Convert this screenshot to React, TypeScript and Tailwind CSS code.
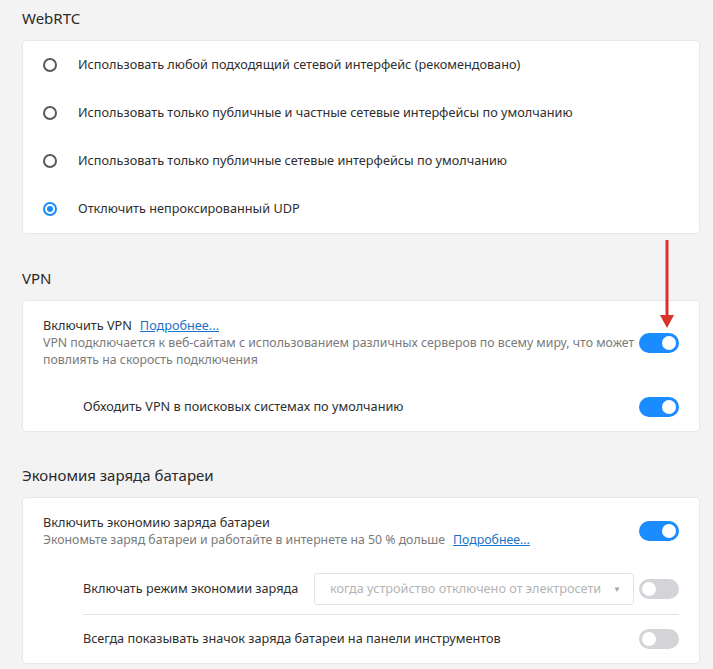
import React from "react";

const font = { fontFamily: '"Noto Sans", "Open Sans", sans-serif' };

function Radio({ checked }: { checked?: boolean }) {
  if (checked) {
    return (
      <span className="w-[14px] h-[14px] rounded-full border-2 border-[#1a8cff] flex items-center justify-center shrink-0">
        <span className="w-[6px] h-[6px] rounded-full bg-[#1a8cff]" />
      </span>
    );
  }
  return <span className="w-[14px] h-[14px] rounded-full border-2 border-[#5a5a5a] shrink-0" />;
}

function Toggle({ on }: { on?: boolean }) {
  return on ? (
    <span className="w-[40px] h-[20px] rounded-full bg-[#1a8cff] flex items-center justify-end px-[3px] shrink-0">
      <span className="w-[14px] h-[14px] rounded-full bg-white" />
    </span>
  ) : (
    <span className="w-[40px] h-[20px] rounded-full bg-[#d3d3d8] flex items-center justify-start px-[3px] shrink-0">
      <span className="w-[14px] h-[14px] rounded-full bg-white" />
    </span>
  );
}

function Title({ children }: { children: React.ReactNode }) {
  return <h2 className="text-[15px] leading-[20px] text-[#2a2a2a] mb-[12px]">{children}</h2>;
}

const radios = [
  "Использовать любой подходящий сетевой интерфейс (рекомендовано)",
  "Использовать только публичные и частные сетевые интерфейсы по умолчанию",
  "Использовать только публичные сетевые интерфейсы по умолчанию",
  "Отключить непроксированный UDP",
];

export default function App() {
  return (
    <div className="min-h-screen bg-[#f3f3f4] pl-[22px] pr-[13px] pt-[8px] text-[12.7px] text-[#2e2e2e]" style={font}>
      <Title>WebRTC</Title>
      <div className="bg-white rounded-[4px] border border-[#e8e8ea]">
        {radios.map((r, i) => (
          <div key={i} className="h-[48px] flex items-center pl-[20px] gap-[21px]">
            <Radio checked={i === 3} />
            <span>{r}</span>
          </div>
        ))}
      </div>

      <div className="mt-[34px]">
        <Title>VPN</Title>
        <div className="relative bg-white rounded-[4px] border border-[#e8e8ea] px-[20px]">
          <div className="flex items-center pt-[16px] pb-[15px] leading-[17px]">
            <div className="flex-1">
              <div className="flex gap-[8px]">
                <span>Включить VPN</span>
                <a className="text-[#1a73c8] underline">Подробнее...</a>
              </div>
              <div className="text-[#7a7a7a] text-[12.3px]">
                <span className="whitespace-nowrap">
                  VPN подключается к веб-сайтам с использованием различных серверов по всему миру, что может
                </span>
                <br />
                повлиять на скорость подключения
              </div>
            </div>
            <Toggle on />
          </div>
          <div className="h-[48px] flex items-center pl-[40px]">
            <span className="flex-1">Обходить VPN в поисковых системах по умолчанию</span>
            <Toggle on />
          </div>
          {/* red annotation arrow */}
          <svg className="absolute right-[24px] top-[-61px]" width="16" height="90" viewBox="0 0 16 90">
            <line x1="8" y1="0" x2="8" y2="76" stroke="#d9342b" strokeWidth="3" />
            <polygon points="1,75 15,75 8,88" fill="#d9342b" />
          </svg>
        </div>
      </div>

      <div className="mt-[33px]">
        <Title>Экономия заряда батареи</Title>
        <div className="bg-white rounded-[4px] border border-[#e8e8ea] px-[20px]">
          <div className="flex items-center pt-[16px] pb-[16px] leading-[17px]">
            <div className="flex-1">
              <div>Включить экономию заряда батареи</div>
              <div className="text-[#7a7a7a] text-[12.3px] flex gap-[8px]">
                <span>Экономьте заряд батареи и работайте в интернете на 50 % дольше</span>
                <a className="text-[#1a73c8] underline">Подробнее...</a>
              </div>
            </div>
            <Toggle on />
          </div>
          <div className="ml-[40px]">
            <div className="h-[51px] flex items-center border-b border-[#e3e3e5]">
              <span className="flex-1">Включать режим экономии заряда</span>
              <div className="w-[320px] h-[32px] border border-[#e3e3e5] rounded-[3px] flex items-center pl-[15px] pr-[12px] mr-[5px] text-[#b4b4b4]">
                <span className="flex-1">когда устройство отключено от электросети</span>
                <span className="text-[8px] text-[#a8a8a8]">▼</span>
              </div>
              <Toggle />
            </div>
            <div className="h-[48px] flex items-center">
              <span className="flex-1">Всегда показывать значок заряда батареи на панели инструментов</span>
              <Toggle />
            </div>
          </div>
        </div>
      </div>
    </div>
  );
}
